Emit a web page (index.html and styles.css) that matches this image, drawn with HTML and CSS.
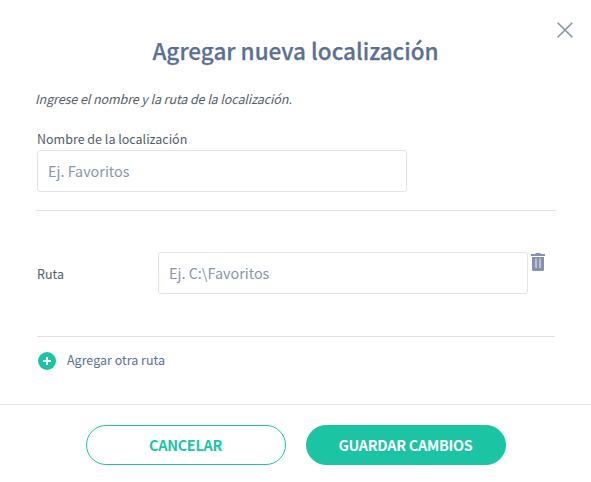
FILE: index.html
```html
<!DOCTYPE html>
<html lang="es">
<head>
    <meta charset="UTF-8" />
    <meta name="viewport" content="width=device-width, initial-scale=1.0" />
    <title>Agregar nueva localización</title>
    <link rel="stylesheet" href="styles.css">
</head>
<body>
    <main class="modal">
        <header class="modal-header">
            <button type="button" class="close" aria-label="Cerrar">
                <svg width="16" height="16" viewBox="0 0 16 16">
                    <path d="M0.7 0.7 L15.3 15.3 M15.3 0.7 L0.7 15.3" fill="none" stroke="#8290a4" stroke-width="1.5" />
                </svg>
            </button>
            <h2>Agregar nueva localización</h2>
        </header>
        <form id="locationForm">
            <div class="modal-body">
                <p class="intro">Ingrese el nombre y la ruta de la localización.</p>
                <div class="name-group">
                    <label for="name">Nombre de la localización</label>
                    <input type="text" id="name" placeholder="Ej. Favoritos" />
                </div>
                <div class="path-group">
                    <label for="path">Ruta</label>
                    <input type="text" id="path" placeholder="Ej. C:\Favoritos" />
                    <button type="button" class="delete" aria-label="Eliminar ruta">
                        <svg width="14" height="18" viewBox="0 0 14 18">
                            <path d="M4.5 0 H9.5 V1 H14 V3 H0 V1 H4.5 Z M1 4 H13 V16.5 Q13 18 11.5 18 H2.5 Q1 18 1 16.5 Z" fill="#8492af" />
                            <path d="M5 5.5 V15 M9 5.5 V15" stroke="#dde2ec" stroke-width="1.2" />
                        </svg>
                    </button>
                </div>
                <button type="button" class="add-path">
                    <svg width="18" height="18" viewBox="0 0 18 18">
                        <circle cx="9" cy="9" r="9" fill="#1bc5a4" />
                        <path d="M9 5 V13 M5 9 H13" stroke="#ffffff" stroke-width="1.8" />
                    </svg>
                    <span>Agregar otra ruta</span>
                </button>
            </div>
            <footer class="modal-footer">
                <button type="button" class="btn btn-outline">CANCELAR</button>
                <button type="submit" class="btn btn-primary">GUARDAR CAMBIOS</button>
            </footer>
        </form>
    </main>
</body>
</html>
```
FILE: styles.css
```css
* {
    box-sizing: border-box;
}
body {
    margin: 0;
    background-color: #ffffff;
    color: #525d68;
    font-family: "Noto Sans CJK SC", "Noto Sans", sans-serif;
    font-size: 12.5px;
    line-height: 18px;
}
button {
    padding: 0;
    border: none;
    background: none;
    font-family: inherit;
    cursor: pointer;
}
svg {
    display: block;
}
.modal {
    height: 482px;
}
.modal-header {
    display: flex;
    flex-direction: column;
    padding-top: 22px;
}
.close {
    align-self: flex-end;
    height: 16px;
    margin-right: 18px;
}
h2 {
    margin: -4px 0 1px;
    color: #5c7092;
    font-size: 22.5px;
    font-weight: 500;
    line-height: 32px;
    text-align: center;
    -webkit-text-stroke: 0.25px #5c7092;
}
.modal-body {
    height: 337px;
    padding: 23px 35px 0;
}
.intro {
    margin: 0;
    font-style: italic;
    letter-spacing: -0.08px;
}
.name-group {
    width: 520px;
    height: 81px;
    margin: 22px 0 0 1px;
    padding-left: 1px;
    border-bottom: 1px solid #e1e2e4;
}
.name-group label {
    display: block;
    height: 20px;
}
input[type="text"] {
    display: block;
    width: 370px;
    height: 42px;
    padding: 0 10px 2px;
    border: 1px solid #e1e3e6;
    border-radius: 3px;
    color: #525d68;
    font-family: inherit;
    font-size: 14.4px;
}
input::placeholder {
    color: #8795ad;
}
.path-group {
    display: flex;
    align-items: flex-start;
    width: 518px;
    height: 126px;
    margin-left: 2px;
    padding-top: 41px;
    border-bottom: 1px solid #e1e2e4;
}
.path-group label {
    width: 121px;
    padding-top: 13px;
}
.delete {
    margin: 1px 0 0 3px;
}
.add-path {
    display: flex;
    align-items: center;
    gap: 11px;
    margin: 15px 0 0 3px;
    color: #5c7092;
    font-size: 12.5px;
    line-height: 18px;
}
.add-path span {
    margin-top: -2px;
}
.modal-footer {
    display: flex;
    justify-content: center;
    gap: 20px;
    height: 78px;
    padding-top: 20px;
    border-top: 1px solid #e1e2e4;
}
.btn {
    width: 200px;
    height: 40px;
    padding-bottom: 2px;
    border: 1px solid #1bc5a4;
    border-radius: 20px;
    font-size: 14.4px;
    font-weight: 700;
    letter-spacing: -0.25px;
}
.btn-outline {
    color: #1bc5a4;
}
.btn-primary {
    background-color: #1bc5a4;
    color: #ffffff;
}
```
